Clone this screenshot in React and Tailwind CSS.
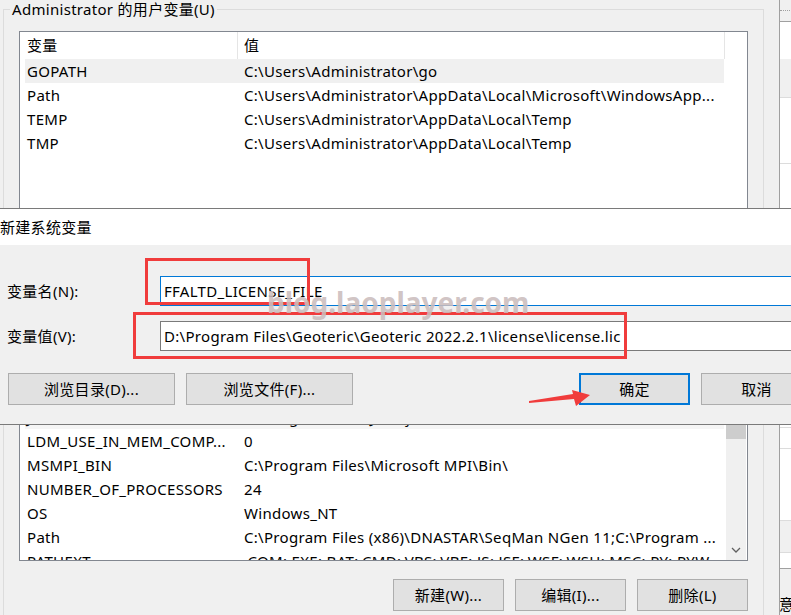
import React from "react";

const userVars = [
  { name: "GOPATH", value: "C:\\Users\\Administrator\\go", selected: true },
  { name: "Path", value: "C:\\Users\\Administrator\\AppData\\Local\\Microsoft\\WindowsApp..." },
  { name: "TEMP", value: "C:\\Users\\Administrator\\AppData\\Local\\Temp" },
  { name: "TMP", value: "C:\\Users\\Administrator\\AppData\\Local\\Temp" },
];

const systemVars = [
  { name: "JAVA_HOME", value: "C:\\Program Files\\Java\\jdk1.8.0_301", faint: true },
  { name: "LDM_USE_IN_MEM_COMP...", value: "0" },
  { name: "MSMPI_BIN", value: "C:\\Program Files\\Microsoft MPI\\Bin\\" },
  { name: "NUMBER_OF_PROCESSORS", value: "24" },
  { name: "OS", value: "Windows_NT" },
  { name: "Path", value: "C:\\Program Files (x86)\\DNASTAR\\SeqMan NGen 11;C:\\Program ..." },
  { name: "PATHEXT", value: ".COM;.EXE;.BAT;.CMD;.VBS;.VBE;.JS;.JSE;.WSF;.WSH;.MSC;.PY;.PYW" },
];

function VarRow({ name, value, selected, faint }) {
  return (
    <div
      className={`flex h-6 w-[699px] shrink-0 items-center ${
        selected ? "bg-[#f0f0f0]" : faint ? "bg-[#f5f5f5]" : ""
      }`}
    >
      <div className="w-[212px] shrink-0 overflow-hidden whitespace-nowrap pl-[2px]">{name}</div>
      <div className="flex-1 overflow-hidden whitespace-nowrap pl-[7px]">{value}</div>
    </div>
  );
}

function ListHeader() {
  return (
    <div className="flex h-[27px] shrink-0 items-center bg-white">
      <div className="flex h-full w-[218px] items-center border-r border-[#e5e5e5] pl-[7px]">变量</div>
      <div className="flex h-full w-[487px] items-center border-r border-[#e5e5e5] pl-[6px]">值</div>
    </div>
  );
}

function WinButton({ children, className = "" }) {
  return (
    <button
      className={`flex h-[32px] items-center justify-center bg-[#e1e1e1] text-black ${className}`}
    >
      {children}
    </button>
  );
}

export default function App() {
  return (
    <div className="relative flex h-[615px] w-[791px] overflow-hidden bg-[#f0f0f0] font-['Noto_Sans','Noto_Sans_CJK_SC',sans-serif] text-[15px] tracking-[0.3px] text-black">
      {/* environment variables window */}
      <div className="h-full w-[780px] shrink-0 border-r border-[#a0a0a0]">
        <div className="relative ml-[3px] mt-[9px] h-[640px] w-[761px] border-x border-t border-[#dcdcdc] pl-[15px]">
          <span className="absolute -top-[11px] left-[6px] bg-[#f0f0f0] px-[2px] leading-[20px]">
            Administrator 的用户变量(U)
          </span>

          {/* user variables */}
          <div className="mt-[21px] flex h-[200px] w-[729px] flex-col border border-[#828790] bg-white">
            <ListHeader />
            <div className="flex flex-col pl-[5px]">
              {userVars.map((v) => (
                <VarRow key={v.name} {...v} />
              ))}
            </div>
          </div>

          {/* system variables */}
          <div className="mt-[146px] flex h-[184px] w-[729px] border border-[#828790] bg-white">
            <div className="flex w-[706px] flex-col overflow-hidden">
              <ListHeader />
              <div className="flex flex-col pl-[5px]">
                {systemVars.map((v) => (
                  <VarRow key={v.name} {...v} />
                ))}
              </div>
            </div>
            <div className="flex w-[20px] flex-col bg-[#f0f0f0]">
              <div className="h-[20px]" />
              <div className="h-[41px] bg-[#cdcdcd]" />
              <div className="flex-1" />
              <div className="flex h-[20px] items-center justify-center">
                <svg width="10" height="6" viewBox="0 0 10 6">
                  <path d="M1 1 L5 5 L9 1" fill="none" stroke="#606060" strokeWidth="1.3" />
                </svg>
              </div>
            </div>
          </div>

          <div className="mt-[18px] flex w-[729px] justify-end gap-[11px]">
            <WinButton className="w-[111px] border border-[#adadad]">新建(W)...</WinButton>
            <WinButton className="w-[111px] border border-[#adadad]">编辑(I)...</WinButton>
            <WinButton className="w-[111px] border border-[#adadad]">删除(L)</WinButton>
          </div>
        </div>
      </div>

      {/* window behind, right edge */}
      <div className="flex h-full flex-1 flex-col bg-white">
        <div className="h-[21px] bg-[#f0f0f0] pt-[10px]">
          <div className="border-t border-dotted border-[#a0a0a0]" />
        </div>
        <div className="h-[38px] border-t border-[#a0a0a0]" />
        <div className="h-[39px] border-b border-[#dcdcdc] bg-[#f0f0f0]" />
        <div className="h-[66px] border-b border-[#dcdcdc]" />
        <div className="h-[264px] border-b border-[#dcdcdc]" />
        <div className="h-[21px] border-b border-[#dcdcdc]" />
        <div className="h-[71px]" />
        <div className="h-[33px] border-y border-[#dcdcdc] bg-[#f0f0f0]" />
        <div className="h-[16px] border-b border-[#a0a0a0]" />
        <div className="flex flex-1 items-end overflow-hidden bg-[#f0f0f0] pb-[2px] leading-[18px]">
          <span className="-ml-[1px]">意</span>
        </div>
      </div>

      {/* new system variable dialog */}
      <div className="absolute left-0 top-[208px] w-[830px] border-y border-[#7a7a7a]">
        <div className="flex h-[36px] items-center bg-white">新建系统变量</div>
        <div className="h-[179px] bg-[#f0f0f0] pt-[31px]">
          <div className="flex h-[30px] items-center">
            <div className="w-[160px] pl-[7px]">变量名(N):</div>
            <div className="flex h-full flex-1 items-center border border-[#0078d7] bg-white pl-[3px]">
              FFALTD_LICENSE_FILE
            </div>
          </div>
          <div className="mt-[15px] flex h-[30px] items-center">
            <div className="w-[160px] pl-[7px]">变量值(V):</div>
            <div className="flex h-full flex-1 items-center border border-[#7a7a7a] bg-white pl-[3px]">
              D:\Program Files\Geoteric\Geoteric 2022.2.1\license\license.lic
            </div>
          </div>
          <div className="mt-[22px] flex">
            <WinButton className="ml-[8px] w-[167px] border border-[#adadad]">浏览目录(D)...</WinButton>
            <WinButton className="ml-[11px] w-[167px] border border-[#adadad]">浏览文件(F)...</WinButton>
            <WinButton className="ml-[226px] w-[111px] border-2 border-[#0078d7]">确定</WinButton>
            <WinButton className="ml-[11px] w-[111px] border border-[#adadad]">取消</WinButton>
          </div>
        </div>
      </div>

      {/* annotations */}
      <div className="absolute left-[145px] top-[258px] h-[47px] w-[165px] border-[3px] border-[#f03c3c]" />
      <div className="absolute left-[133px] top-[312px] h-[47px] w-[494px] border-[3px] border-[#f03c3c]" />
      <div className="absolute left-[267px] top-[287px] font-['Noto_Sans',sans-serif] text-[28px] font-bold leading-[30px] tracking-normal text-[#cbbdbd]/90">
        blog.laoplayer.com
      </div>
      <svg className="absolute left-[525px] top-[385px]" width="70" height="24" viewBox="0 0 70 24">
        <polygon points="4,16 48,9 47,5 65,10 51,21 49,14 4,18" fill="#f03c3c" />
      </svg>
    </div>
  );
}
